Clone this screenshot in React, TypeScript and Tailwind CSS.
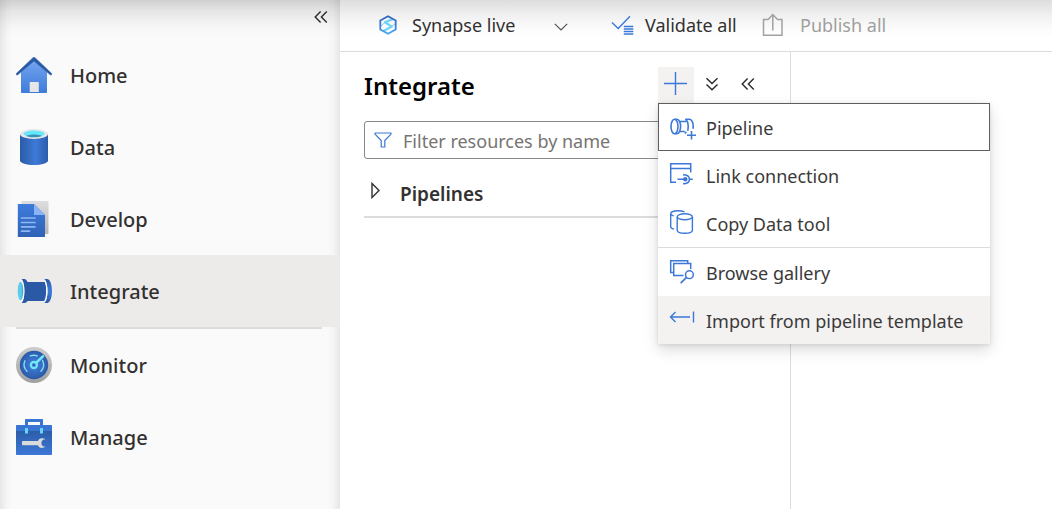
import type { ReactNode } from "react";

function HomeIcon() {
  return (
    <svg width="36" height="36" viewBox="0 0 36 36" aria-hidden="true">
      <defs>
        <linearGradient id="home-body" x1="0" y1="0" x2="0" y2="1">
          <stop offset="0" stopColor="#76a4f0" />
          <stop offset="1" stopColor="#3d7bd9" />
        </linearGradient>
      </defs>
      <path d="M18 3 31 15v20.3a.7.7 0 0 1-.7.7H5.700a.7.7 0 0 1-.7-.7V15z" fill="url(#home-body)" />
      <path d="M13.700 25.500a.5.5 0 0 1 .5-.5h8.100a.5.5 0 0 1 .5.500V35h-9.100z" fill="#e6e6e6" />
      <path d="M18 .3c.4 0 .7.200 1 .4L35.600 16.400c.4.400.5.800.1 1.200-.4.500-1 .5-1.500.1L18 3.900 1.800 17.700c-.5.400-1.100.4-1.500-.1-.4-.4-.3-.8.1-1.200L17 .7c.3-.2.600-.4 1-.4z" fill="#2a5aa6" stroke="#2a5aa6" strokeWidth=".6" />
    </svg>
  );
}

function DataIcon() {
  return (
    <svg width="36" height="36" viewBox="0 0 36 36" aria-hidden="true">
      <defs>
        <linearGradient id="data-body" x1="0" y1="0" x2="1" y2="0">
          <stop offset="0" stopColor="#2a5caa" />
          <stop offset=".25" stopColor="#3468ba" />
          <stop offset=".55" stopColor="#3f7ad8" />
          <stop offset="1" stopColor="#2a5caa" />
        </linearGradient>
      </defs>
      <path d="M4 5v26.500C4 34 10.300 36 18 36s14-2 14-4.500V5z" fill="url(#data-body)" />
      <ellipse cx="18" cy="5" rx="14" ry="5" fill="#e8e8e8" />
      <ellipse cx="18" cy="4.800" rx="10.600" ry="3.200" fill="#50e6ff" opacity=".85" />
      <path d="M10 6.900C12 5.900 15 5.400 18 5.400s6 .5 8 1.500C24 7.700 21 8.200 18 8.200s-6-.5-8-1.300z" fill="#3793b5" />
    </svg>
  );
}

function DevelopIcon() {
  return (
    <svg width="36" height="36" viewBox="0 0 36 36" aria-hidden="true">
      <defs>
        <linearGradient id="dev-back" x1="0" y1="0" x2="0" y2="1">
          <stop offset="0" stopColor="#dedede" />
          <stop offset="1" stopColor="#b5b5b5" />
        </linearGradient>
        <linearGradient id="dev-front" x1="0" y1="0" x2="0" y2="1">
          <stop offset="0" stopColor="#3d7bdc" />
          <stop offset="1" stopColor="#3063b5" />
        </linearGradient>
      </defs>
      <rect x="5.500" y="0" width="27" height="33" rx=".6" fill="url(#dev-back)" />
      <path d="M1.800 3.500c0-.3.200-.5.500-.5H18l11 11v21.500c0 .3-.2.500-.5.500H2.300a.5.5 0 0 1-.5-.5z" fill="url(#dev-front)" />
      <path d="M18 3l11 11H18.600a.6.600 0 0 1-.6-.6z" fill="#8ab4f4" />
      <path d="M5.500 17h13.500M5.500 21.500h13.500M5.500 25.800h13.500M5.500 30.100h8" stroke="#8fb6f5" strokeWidth="1.700" strokeLinecap="round" />
    </svg>
  );
}

function IntegrateIcon() {
  return (
    <svg width="36" height="36" viewBox="0 0 36 36" aria-hidden="true">
      <defs>
        <linearGradient id="int-right" x1="0" y1="0" x2="0" y2="1">
          <stop offset="0" stopColor="#2a5aa6" />
          <stop offset=".5" stopColor="#3f7bdd" />
          <stop offset="1" stopColor="#2a5aa6" />
        </linearGradient>
        <linearGradient id="int-cap" x1="0" y1="0" x2="1" y2="0">
          <stop offset="0" stopColor="#5ccbed" />
          <stop offset=".6" stopColor="#5ccbed" />
          <stop offset="1" stopColor="#43a4c4" />
        </linearGradient>
      </defs>
      <path d="M9 9h20c2 5 2 14 0 19H9z" fill="#2a5aa6" />
      <path d="M5.500 6h2.800c1.500.2 2.700 1.700 3.200 3v19c-.6 1.300-1.700 1.900-3.200 2H5.500c2-1.500 2.700-6.500 2.700-12S7.500 7.500 5.500 6z" fill="#2a5aa6" />
      <path d="M4.500 7c2.200 1.300 3.400 6 3.400 11s-1.200 9.700-3.400 11" fill="none" stroke="#fff" strokeWidth="1.200" />
      <ellipse cx="4.500" cy="18" rx="2.800" ry="9.200" fill="url(#int-cap)" />
      <path d="M28.300 6h3.200c2.800.7 4.500 6 4.500 12s-1.700 11.300-4.500 12h-3.200c2-1.500 3.200-6.500 3.200-12S30.300 7.500 28.300 6z" fill="url(#int-right)" />
      <path d="M28.600 7.500c1.500 2.300 2.200 6 2.200 10.500s-.7 8.200-2.200 10.500" fill="none" stroke="#fff" strokeWidth="1.300" />
    </svg>
  );
}

function MonitorIcon() {
  return (
    <svg width="36" height="36" viewBox="0 0 36 36" aria-hidden="true">
      <defs>
        <linearGradient id="mon-ring" x1="0" y1="0" x2="0" y2="1">
          <stop offset="0" stopColor="#cdcdcd" />
          <stop offset="1" stopColor="#a0a0a0" />
        </linearGradient>
        <radialGradient id="mon-face">
          <stop offset="0" stopColor="#4180df" />
          <stop offset=".5" stopColor="#376fc6" />
          <stop offset="1" stopColor="#2a5aa6" />
        </radialGradient>
      </defs>
      <circle cx="18" cy="18" r="18" fill="url(#mon-ring)" />
      <circle cx="18" cy="18" r="14.200" fill="url(#mon-face)" />
      <g fill="none" stroke="#83dcf5" strokeWidth="1.400" strokeLinecap="round">
        <path d="M11 24.300a9.600 9.600 0 0 1-2.100-10.500" />
        <path d="M14.300 8.900a9.700 9.700 0 0 1 7 0" />
        <path d="M26.600 13.500a9.700 9.700 0 0 1-1.600 10.800" />
      </g>
      <path d="M19.700 16.300 27 9.300" stroke="#72e7fa" strokeWidth="2.600" strokeLinecap="round" />
      <circle cx="17.900" cy="18" r="3" fill="#2e64b8" stroke="#72e7fa" strokeWidth="2.300" />
    </svg>
  );
}

function ManageIcon() {
  return (
    <svg width="36" height="36" viewBox="0 0 36 36" aria-hidden="true">
      <defs>
        <linearGradient id="man-body" x1="0" y1="0" x2="0" y2="1">
          <stop offset="0" stopColor="#2c5da8" />
          <stop offset="1" stopColor="#3d78d7" />
        </linearGradient>
      </defs>
      <path d="M9 7V1c0-.6.400-1 1-1h16c.6 0 1 .4 1 1v6h-3V3H12v4z" fill="#3976d3" />
      <path d="M0 6.700C0 6.300.3 6 .7 6h34.600c.4 0 .7.300.7.700V13H0z" fill="#3976d3" />
      <path d="M0 12h36v23.300c0 .4-.3.700-.7.700H.700a.7.700 0 0 1-.7-.7z" fill="url(#man-body)" />
      <rect x="9" y="9" width="3" height="5.500" fill="#65d7f2" />
      <rect x="24" y="9" width="3" height="5.500" fill="#65d7f2" />
      <path d="M6.700 22h15.200c.6-1.600 2-2.800 4-2.800 1.500 0 2.800.5 3.600 1.400h-2.400L25.500 22.800v2.600l1.600 2.200h2.400c-.8.900-2.100 1.400-3.600 1.400-2 0-3.400-1.200-4-2.800H6.700a.7.700 0 0 1-.7-.7v-2.800c0-.4.300-.7.700-.7z" fill="#d9dadb" />
    </svg>
  );
}

function DoubleChevronLeft() {
  return (
    <svg width="14" height="14" viewBox="0 0 14 14" fill="none" stroke="#2b2a29" strokeWidth="1.400" aria-hidden="true">
      <path d="M6.600 1.500 1.200 7l5.400 5.500M12.800 1.500 7.400 7l5.400 5.500" />
    </svg>
  );
}

function DoubleChevronDown() {
  return (
    <svg width="14" height="14" viewBox="0 0 14 14" fill="none" stroke="#2b2a29" strokeWidth="1.400" aria-hidden="true">
      <path d="M1.500 1.200 7 6.600l5.500-5.400M1.500 7.400 7 12.800l5.500-5.400" />
    </svg>
  );
}

function SynapseIcon() {
  return (
    <svg width="18" height="20" viewBox="0 0 18 20" fill="none" aria-hidden="true">
      <defs>
        <linearGradient id="syn-edge" x1="0" y1="0" x2="0" y2="1">
          <stop offset="0" stopColor="#2f66bd" />
          <stop offset=".6" stopColor="#3f7fe0" />
          <stop offset="1" stopColor="#4aa8ee" />
        </linearGradient>
      </defs>
      <path d="M13.500 4.200 6 7.300l6.800 4.300L4.500 16" stroke="#6fd3f5" strokeWidth="2.300" strokeLinejoin="round" />
      <path d="M2 11 6 7.300M12.800 11.600l3.400-3" stroke="#7cc8f2" strokeWidth="1" />
      <path d="M9 1.200 16.700 5.500v9L9 18.800 1.300 14.500v-9z" stroke="url(#syn-edge)" strokeWidth="1.800" />
    </svg>
  );
}

function ChevronDown() {
  return (
    <svg width="14" height="8" viewBox="0 0 14 8" fill="none" stroke="#55534f" strokeWidth="1.200" aria-hidden="true">
      <path d="M.8.8 7 7 13.200.8" />
    </svg>
  );
}

function ValidateIcon() {
  return (
    <svg width="24" height="20" viewBox="0 0 24 20" fill="none" stroke="#3b78d8" aria-hidden="true">
      <path d="M1 7.600 7.200 13.600 19 1.200" strokeWidth="1.400" />
      <path d="M12.800 11.500h9.500M12.800 14h9.500M12.800 16.500h9.500M12.800 19h9.500" strokeWidth="1.300" />
    </svg>
  );
}

function PublishIcon() {
  return (
    <svg width="22" height="24" viewBox="0 0 22 24" fill="none" stroke="#a3a19f" strokeWidth="1.500" aria-hidden="true">
      <path d="M6 6.500H1.500v15.800h18.500V6.500h-4.500M10.800 17.500V2M5.800 6.800 10.800 1.600l5 5.200" />
    </svg>
  );
}

function FilterIcon() {
  return (
    <svg width="18" height="16" viewBox="0 0 18 16" fill="none" stroke="#3b78d8" strokeWidth="1.200" strokeLinejoin="round" aria-hidden="true">
      <path d="M1 1h16v1.200L10.800 8.500V15H7.200V8.500L1 2.200z" />
    </svg>
  );
}

function PipelineIcon() {
  return (
    <svg width="28" height="26" viewBox="0 0 28 26" className="shrink-0" fill="none" stroke="#3b78d8" strokeWidth="1.600" aria-hidden="true">
      <ellipse cx="6.500" cy="12.500" rx="3.500" ry="7.200" />
      <path d="M6.500 5.300H9c2 0 3.600 3.100 3.600 7.200S11 19.700 9 19.700H6.500" />
      <path d="M12 7.500h6.500M12 17.500h4.800" />
      <path d="M17.200 5.300c1.900.7 3 3.700 3 7.200 0 1.700-.2 3.100-.6 4.300M17.200 5.300h4.200c2.200.4 3.800 3.400 3.800 7.200 0 .9-.1 1.700-.3 2.300M16.800 19.500l1.600-1.800" />
      <path d="M23.500 17v8.500M19 21.200h9" />
    </svg>
  );
}

function LinkIcon() {
  return (
    <svg width="26" height="24" viewBox="0 0 26 24" fill="none" stroke="#3b78d8" strokeWidth="1.500" aria-hidden="true">
      <path d="M7 20.300H1.700V1.700h20v8.800M1.700 6.500h20" />
      <path d="M8.500 17.200h8M14 12.700c4 0 6.400 1.700 6.400 4.500s-2.400 4.500-6.400 4.500M20.400 17.200h3.400" />
      <circle cx="16.300" cy="17.200" r="1.500" fill="#3b78d8" />
    </svg>
  );
}

function CopyIcon() {
  return (
    <svg width="26" height="26" viewBox="0 0 26 26" fill="none" stroke="#3b78d8" strokeWidth="1.400" aria-hidden="true">
      <path d="M15.500 2c-1.500-.9-3.800-1.300-6.300-1.300-4.200 0-7.500 1.300-7.500 3v13c0 1 1.200 1.900 3.300 2.400M1.700 3.700c0 .8 1 1.700 3 2.200" />
      <ellipse cx="15.800" cy="6.700" rx="7.600" ry="3" />
      <path d="M8.200 6.700v13.600c0 1.700 3.400 3 7.600 3s7.600-1.300 7.600-3V6.700" />
    </svg>
  );
}

function GalleryIcon() {
  return (
    <svg width="26" height="26" viewBox="0 0 26 26" fill="none" stroke="#3b78d8" strokeWidth="1.500" aria-hidden="true">
      <path d="M4.500 13.500H1.700V1.700h17v2.500" />
      <path d="M14.500 16.500H4.700V4.500h17v5.500" />
      <circle cx="20.400" cy="15.700" r="3.900" />
      <path d="m17.500 18.400-5.800 5.800" strokeWidth="1.700" />
    </svg>
  );
}

function ImportIcon() {
  return (
    <svg width="26" height="12" viewBox="0 0 26 12" fill="none" stroke="#3b78d8" strokeWidth="1.400" aria-hidden="true">
      <path d="M6.500 1 1.500 6l5 5M1.500 6H21M24.500.5v11" />
    </svg>
  );
}

function NavItem({ icon, label, active = false }: { icon: ReactNode; label: string; active?: boolean }) {
  return (
    <a
      href="#"
      aria-current={active ? "page" : undefined}
      className={
        active
          ? "flex h-[72px] items-center gap-[18px] bg-[#edebe9] px-4 text-[#323130]"
          : "flex h-[72px] items-center gap-[18px] px-4 text-[#323130]"
      }
    >
      {icon}
      <span className="pt-[2px] text-[20px] leading-6 font-medium">{label}</span>
    </a>
  );
}

function MenuItem({ icon, label, state = "normal" }: { icon: ReactNode; label: string; state?: "normal" | "focused" | "hovered" }) {
  const look = {
    normal: "border border-transparent",
    focused: "border border-[#605e5c]",
    hovered: "border border-[#f3f2f1] bg-[#f3f2f1]",
  }[state];
  return (
    <button type="button" role="menuitem" className={`flex h-12 w-full items-center gap-[11px] pr-[22px] pl-[10px] text-left whitespace-nowrap text-[#3b3a39] ${look}`}>
      <span className="flex h-[26px] w-[26px] shrink-0 items-start justify-center">{icon}</span>
      <span className="pt-[2px] text-[18px] leading-6">{label}</span>
    </button>
  );
}

function Sidebar() {
  return (
    <nav
      aria-label="Main"
      className="w-[340px] shrink-0 bg-[#fafafa] bg-[linear-gradient(to_bottom,rgba(0,0,0,0.17),rgba(0,0,0,0.08)_12px,rgba(0,0,0,0.02)_26px,transparent_36px),linear-gradient(to_right,rgba(0,0,0,0.08),rgba(0,0,0,0.02)_7px,transparent_13px),linear-gradient(to_left,rgba(0,0,0,0.08),rgba(0,0,0,0.02)_7px,transparent_13px)]"
    >
      <div className="flex h-[39px] justify-end pt-[9px] pr-3">
        <button type="button" aria-label="Collapse navigation" className="flex h-4 items-center">
          <DoubleChevronLeft />
        </button>
      </div>
      <NavItem icon={<HomeIcon />} label="Home" />
      <NavItem icon={<DataIcon />} label="Data" />
      <NavItem icon={<DevelopIcon />} label="Develop" />
      <NavItem icon={<IntegrateIcon />} label="Integrate" active />
      <hr className="mr-[18px] ml-4 h-[2px] border-0 bg-[#dcdcdc]" />
      <NavItem icon={<MonitorIcon />} label="Monitor" />
      <NavItem icon={<ManageIcon />} label="Manage" />
    </nav>
  );
}

function Toolbar() {
  return (
    <header className="flex h-[52px] items-center border-b border-[#dcdcdc] bg-[linear-gradient(to_bottom,#dddddd,#f0f0f0_15px,#fbfbfb_28px,#ffffff_38px)] pb-[2px] pl-[39px] text-[18px] leading-6 whitespace-nowrap text-[#323130]">
      <button type="button" className="flex items-center">
        <SynapseIcon />
        <span className="ml-[15px] w-[142px] text-left">Synapse live</span>
        <span className="pt-1">
          <ChevronDown />
        </span>
      </button>
      <button type="button" className="ml-[43px] flex items-center gap-[10px]">
        <ValidateIcon />
        <span className="w-[93px] text-left">Validate all</span>
      </button>
      <button type="button" disabled className="ml-6 flex items-center gap-4 text-[#a19f9d]">
        <PublishIcon />
        <span>Publish all</span>
      </button>
    </header>
  );
}

function ResourcePanel() {
  return (
    <section className="w-[451px] shrink-0 border-r border-[#dcdcdc] pt-[15px] pl-6">
      <div className="flex h-9 items-center">
        <h1 className="flex-1 pt-[2px] text-[24px] leading-8 font-semibold text-black">Integrate</h1>
        <div className="relative">
          <button type="button" aria-label="Add new resource" aria-haspopup="menu" aria-expanded="true" className="flex h-9 w-9 items-center justify-center bg-[#f3f2f1] pb-[2px]">
            <svg width="24" height="24" viewBox="0 0 24 24" stroke="#3b78d8" strokeWidth="1.400" aria-hidden="true">
              <path d="M11.500 0v23M0 11.500h23" />
            </svg>
          </button>
          <div role="menu" className="absolute top-full left-0 z-10 w-[332px] bg-white shadow-[0_6px_14px_rgba(0,0,0,0.14),0_1px_4px_rgba(0,0,0,0.1)]">
            <MenuItem icon={<PipelineIcon />} label="Pipeline" state="focused" />
            <MenuItem icon={<LinkIcon />} label="Link connection" />
            <MenuItem icon={<CopyIcon />} label="Copy Data tool" />
            <hr className="h-px border-0 bg-[#dcdcdc]" />
            <MenuItem icon={<GalleryIcon />} label="Browse gallery" />
            <MenuItem icon={<span className="flex h-5 items-center"><ImportIcon /></span>} label="Import from pipeline template" state="hovered" />
          </div>
        </div>
        <button type="button" aria-label="Expand all" className="flex h-9 w-9 items-center justify-center pb-[2px]">
          <DoubleChevronDown />
        </button>
        <button type="button" aria-label="Collapse panel" className="mr-6 flex h-9 w-9 items-center justify-center pb-[2px]">
          <DoubleChevronLeft />
        </button>
      </div>
      <label className="mt-[18px] mr-6 flex h-[38px] items-center gap-[11px] rounded-[3px] border border-[#8a8886] pl-[9px]">
        <FilterIcon />
        <input
          type="text"
          aria-label="Filter resources by name"
          placeholder="Filter resources by name"
          className="min-w-0 flex-1 pt-[2px] text-[18px] leading-6 outline-none placeholder:text-[#767472]"
        />
      </label>
      <button type="button" aria-expanded="false" className="flex h-[59px] w-[402px] items-center gap-[18px] border-b-2 border-[#dcdcdc] pt-1 pl-[6px] text-[#323130]">
        <svg width="12" height="18" viewBox="0 0 12 18" fill="none" stroke="#323130" strokeWidth="1.400" aria-hidden="true">
          <path d="M2 2.500v14L9 9.500z" />
        </svg>
        <span className="pt-2 text-[19px] leading-6 font-semibold">Pipelines</span>
      </button>
    </section>
  );
}

export default function App() {
  return (
    <div className="flex min-h-screen overflow-hidden bg-white font-['Noto_Sans','Open_Sans',sans-serif]">
      <Sidebar />
      <div className="flex min-w-0 flex-1 flex-col">
        <Toolbar />
        <main className="flex flex-1">
          <ResourcePanel />
        </main>
      </div>
    </div>
  );
}
